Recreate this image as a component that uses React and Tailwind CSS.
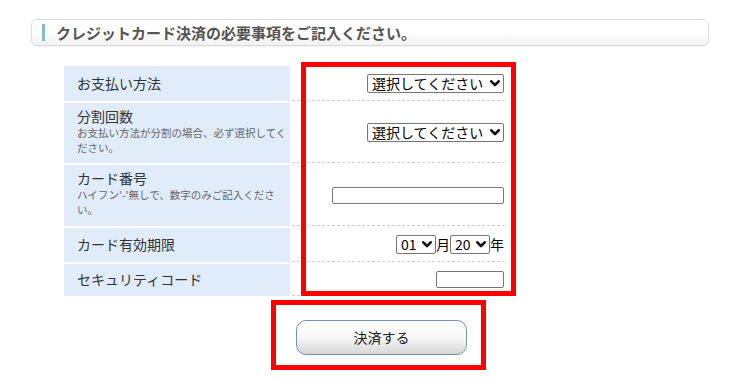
import React from 'react';

const FONT = { fontFamily: '"Noto Sans CJK JP", "Noto Sans", sans-serif' };

function Chevron() {
  return (
    <svg
      className="pointer-events-none absolute right-[4px] top-[6px] h-[7px] w-[10px]"
      viewBox="0 0 10 7"
      fill="none"
    >
      <path d="M1.3 1.3 L5 5 L8.7 1.3" stroke="#111" strokeWidth="2.6" strokeLinecap="round" strokeLinejoin="round" />
    </svg>
  );
}

function Select({ value, width, children }) {
  return (
    <div className="relative" style={{ width }}>
      <select
        defaultValue={value}
        className="block w-full h-[19px] appearance-none rounded-[2px] border border-[#767676] bg-white pl-[4px] pr-[16px] text-[14px] leading-[17px] text-black outline-none"
      >
        {children}
      </select>
      <Chevron />
    </div>
  );
}

function Row({ height, label, note, children, top }) {
  return (
    <div className="grid grid-cols-[226px_213px] gap-x-[2px]" style={{ height }}>
      <div
        className={`flex flex-col bg-[#e0ecfa] pl-[13px] pr-[2px] ${
          top ? 'justify-start pt-[4px]' : 'justify-center pb-[2px]'
        }`}
      >
        <div className="text-[14px] leading-[18px] text-[#333]">{label}</div>
        {note && <div className="text-[10.5px] leading-[15px] text-[#666]">{note}</div>}
      </div>
      <div className="flex items-center justify-end border-b border-dashed border-[#cfcfcf] pr-[1px]">
        {children}
      </div>
    </div>
  );
}

export default function App() {
  return (
    <div className="relative h-[384px] w-[751px] overflow-hidden bg-white" style={FONT}>
      <div className="ml-[31px] mt-[19px] flex h-[27px] w-[678px] items-center rounded-[6px] border border-[#dcdcdc] bg-gradient-to-b from-white via-white to-[#f1f1f1] pl-[10px] shadow-[0_1px_1px_rgba(0,0,0,0.06)]">
        <span className="h-[17px] w-[3px] bg-[#7fc0c8]" />
        <span className="ml-[11px] text-[15px] font-bold leading-[20px] text-[#555]">
          クレジットカード決済の必要事項をご記入ください。
        </span>
      </div>

      <div className="ml-[64px] mt-[20px] flex w-[441px] flex-col gap-y-[2px]">
        <Row height={35} label="お支払い方法">
          <Select value="" width={137}>
            <option value="">選択してください</option>
            <option value="1">一括払い</option>
            <option value="2">分割払い</option>
          </Select>
        </Row>
        <Row
          height={60}
          top
          label="分割回数"
          note={
            <>
              お支払い方法が分割の場合、必ず選択してく
              <br />
              ださい。
            </>
          }
        >
          <Select value="" width={137}>
            <option value="">選択してください</option>
            <option value="3">3回</option>
            <option value="6">6回</option>
          </Select>
        </Row>
        <Row
          height={61}
          top
          label="カード番号"
          note={
            <>
              ハイフン'-'無しで、数字のみご記入くださ
              <br />
              い。
            </>
          }
        >
          <input
            type="text"
            className="h-[17px] w-[172px] rounded-[2px] border border-[#767676] bg-white outline-none"
          />
        </Row>
        <Row height={34} label="カード有効期限">
          <div className="flex items-center text-[14px] text-black">
            <Select value="01" width={40}>
              <option value="01">01</option>
              <option value="02">02</option>
            </Select>
            <span className="leading-[19px]">月</span>
            <Select value="20" width={40}>
              <option value="20">20</option>
              <option value="21">21</option>
            </Select>
            <span className="leading-[19px]">年</span>
          </div>
        </Row>
        <Row height={32} label="セキュリティコード">
          <input
            type="text"
            className="h-[17px] w-[68px] rounded-[2px] border border-[#767676] bg-white outline-none"
          />
        </Row>
      </div>

      <div className="ml-[296px] mt-[24px]">
        <button
          type="button"
          className="h-[35px] w-[171px] rounded-[10px] border border-[#7690b4] bg-gradient-to-b from-white via-[#f7f7f7] to-[#d6d6d6] text-[14px] text-[#222] shadow-[inset_0_1px_0_#fff]"
        >
          決済する
        </button>
      </div>

      <div className="pointer-events-none absolute left-[301px] top-[62px] h-[234px] w-[215px] border-[5px] border-[#ff0000]" />
      <div className="pointer-events-none absolute left-[271px] top-[300px] h-[70px] w-[215px] border-[5px] border-[#ff0000]" />
    </div>
  );
}
